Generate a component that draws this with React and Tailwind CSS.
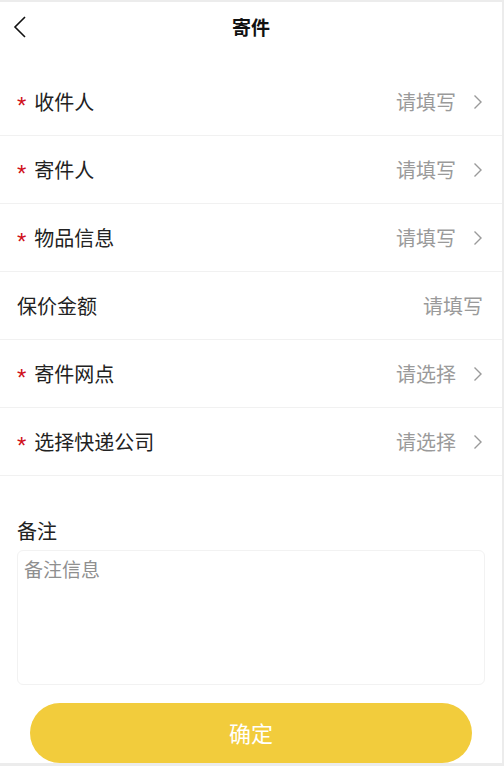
import React from 'react';

const ROWS = [
  { label: '收件人', required: true, value: '请填写', arrow: true },
  { label: '寄件人', required: true, value: '请填写', arrow: true },
  { label: '物品信息', required: true, value: '请填写', arrow: true },
  { label: '保价金额', required: false, value: '请填写', arrow: false },
  { label: '寄件网点', required: true, value: '请选择', arrow: true },
  { label: '选择快递公司', required: true, value: '请选择', arrow: true },
];

const font = { fontFamily: '"Noto Sans CJK SC", "Noto Sans", sans-serif' };

function Chevron() {
  return (
    <svg width="10" height="16" viewBox="0 0 10 16" fill="none" className="ml-[17px]">
      <path d="M1.5 1.5 L8 8 L1.5 14.5" stroke="#9a9a9a" strokeWidth="1.4" />
    </svg>
  );
}

export default function App() {
  return (
    <div
      className="w-[504px] h-[766px] bg-white border-t-2 border-r-2 border-b-[3px] border-[#ececec] flex flex-col overflow-hidden"
      style={font}
    >
      {/* header */}
      <div className="relative h-[50px] flex items-center justify-center shrink-0">
        <svg width="14" height="22" viewBox="0 0 14 22" fill="none" className="absolute left-[13px] top-[14px]">
          <path d="M12 1 L2 11 L12 21" stroke="#111" strokeWidth="1.6" />
        </svg>
        <span className="text-[19px] font-bold text-[#111]">寄件</span>
      </div>

      {/* form rows */}
      <div className="mt-[16px]">
        {ROWS.map((row, i) => (
          <div
            key={i}
            className="h-[68px] flex items-center justify-between pl-[17px] pr-[19px] border-b border-[#f1f1f1]"
          >
            <div className="flex items-center">
              {row.required && (
                <span className="font-['Liberation_Sans',sans-serif] text-[#d0101b] text-[24px] leading-none mr-[8px] mt-[8px]">*</span>
              )}
              <span className="text-[20px] text-[#222]">{row.label}</span>
            </div>
            <div className="flex items-center">
              <span className="text-[20px] text-[#9a9a9a]">{row.value}</span>
              {row.arrow && <Chevron />}
            </div>
          </div>
        ))}
      </div>

      {/* remarks */}
      <div className="px-[17px] mt-[41px]">
        <div className="text-[20px] text-[#222] leading-[28px]">备注</div>
        <div className="mt-[5px] h-[135px] rounded-md border border-[#f2f2f2] px-[6px] pt-[4px]">
          <span className="text-[19px] text-[#8f8f8f]">备注信息</span>
        </div>
      </div>

      {/* submit */}
      <div className="px-[30px] mt-[18px]">
        <button className="w-full h-[60px] rounded-full bg-[#f2cc3c] text-white text-[22px] leading-none pb-[2px]" style={font}>
          确定
        </button>
      </div>
    </div>
  );
}
